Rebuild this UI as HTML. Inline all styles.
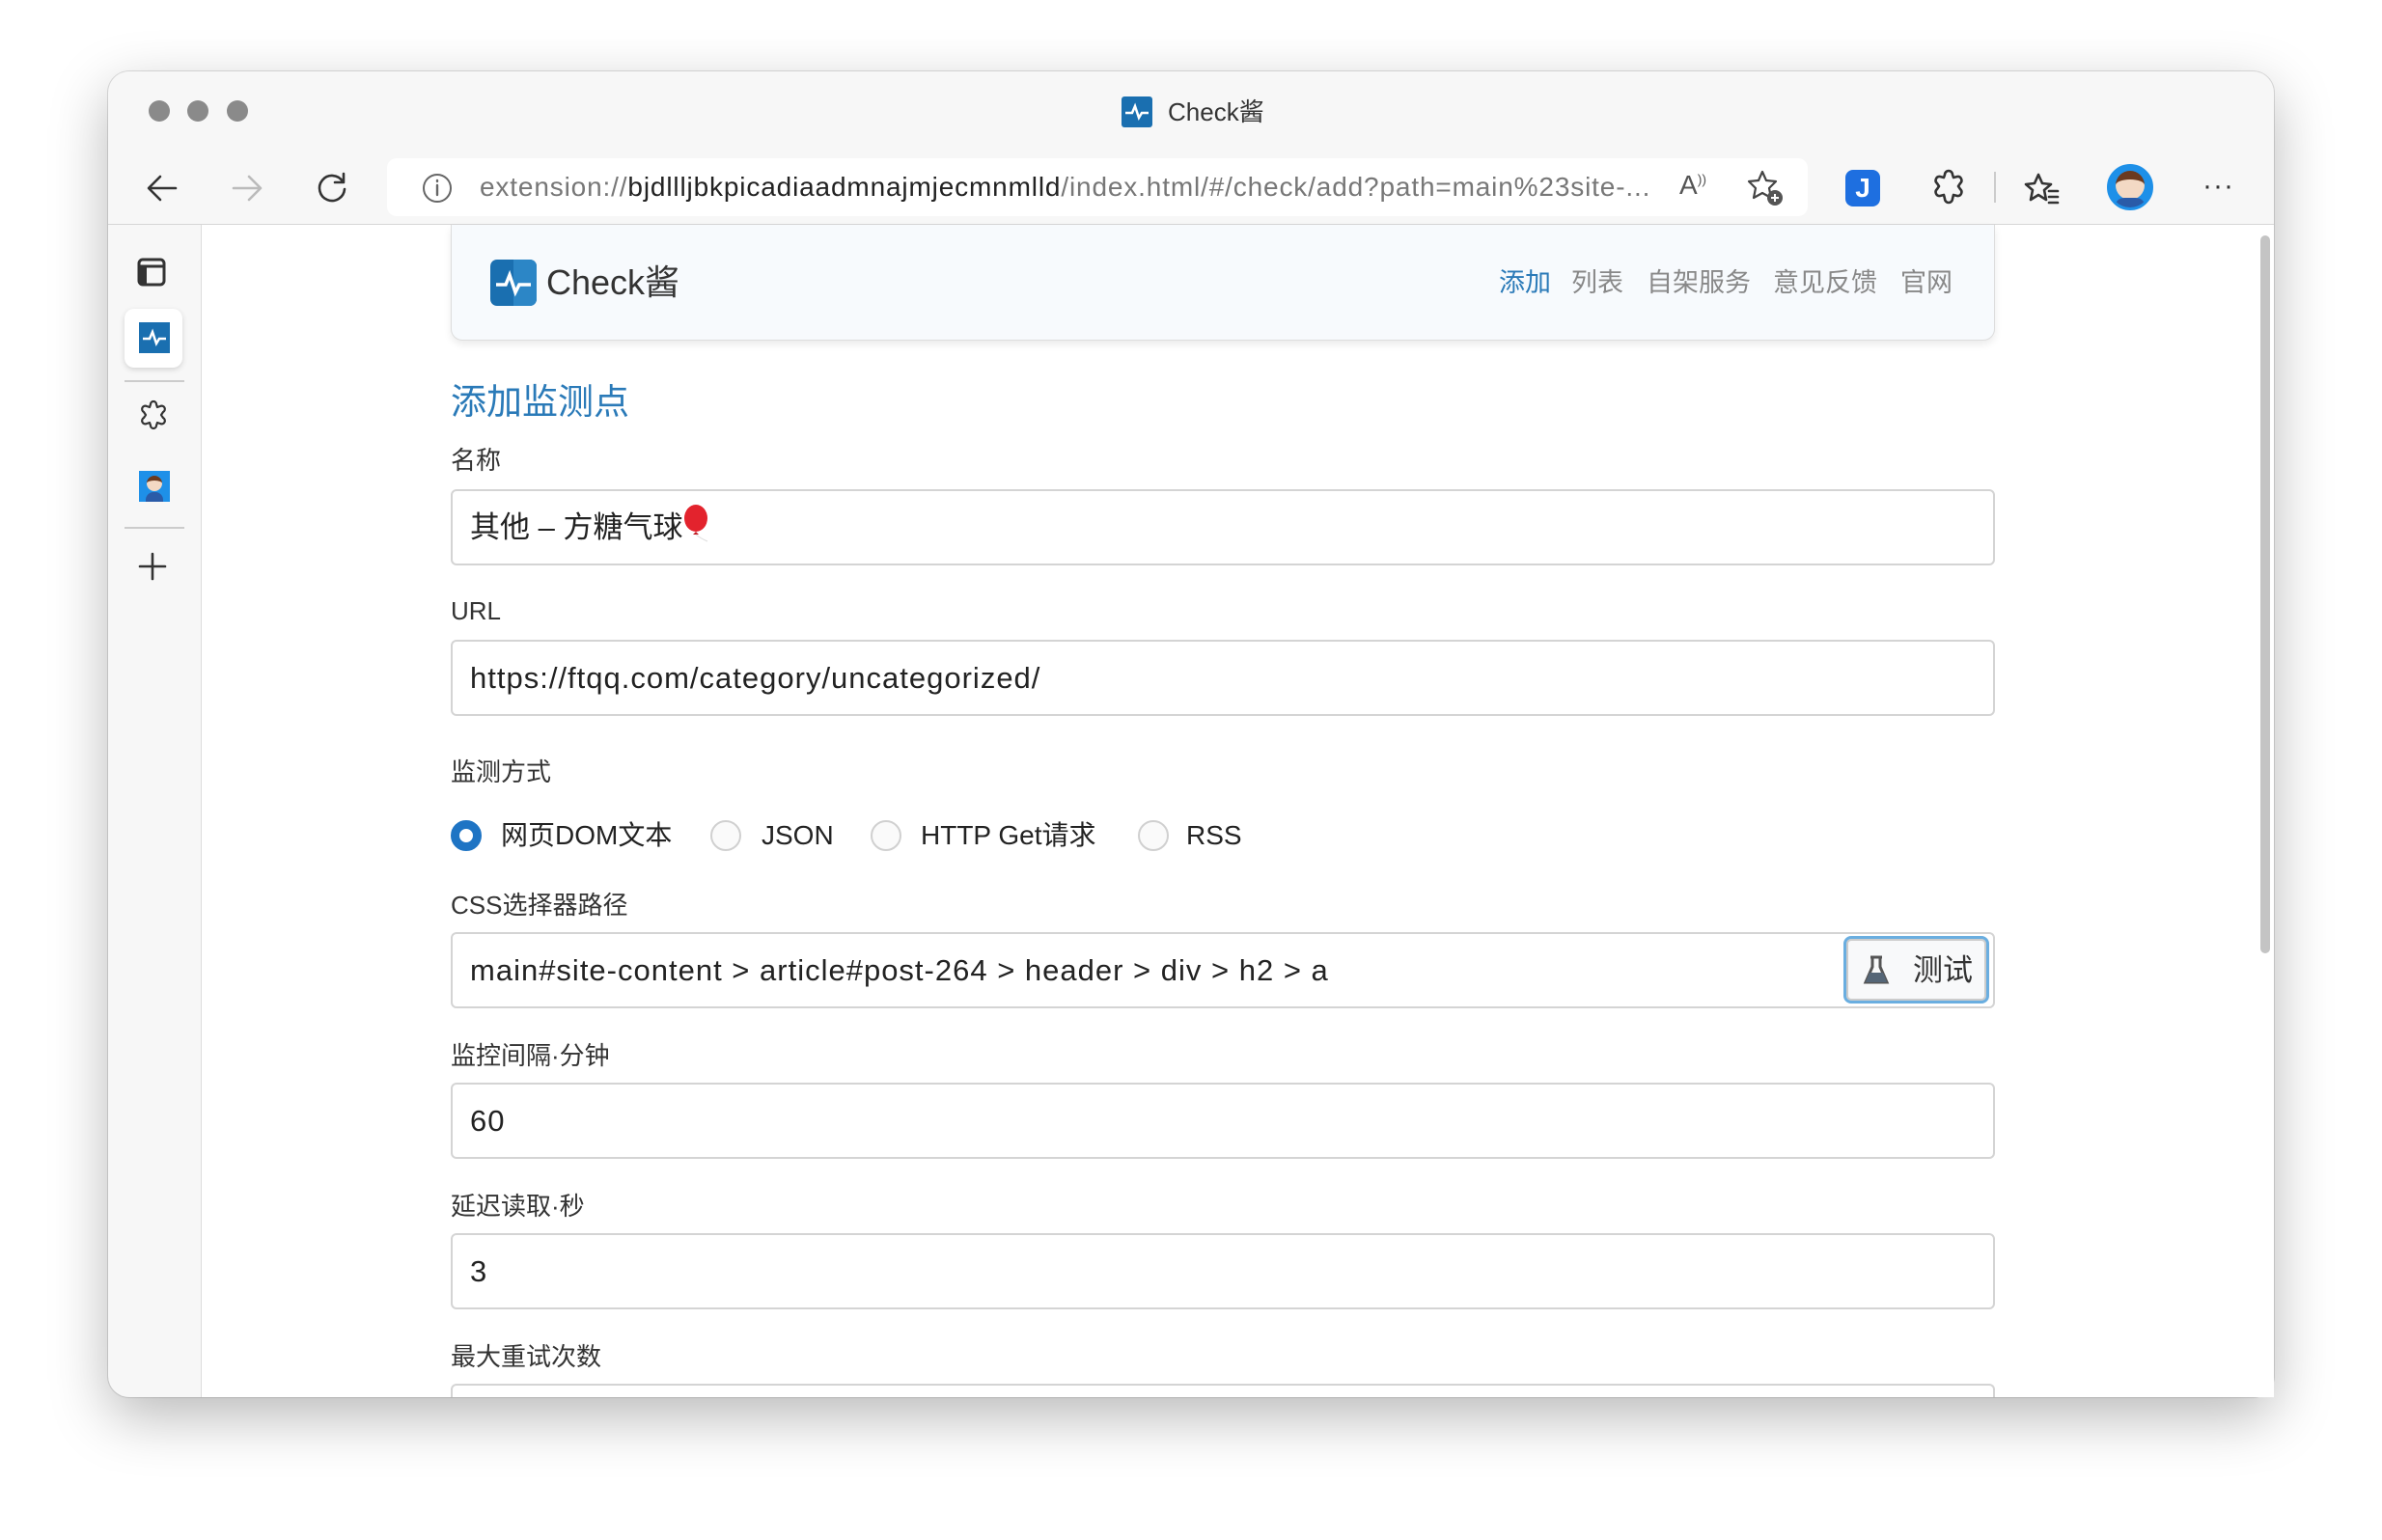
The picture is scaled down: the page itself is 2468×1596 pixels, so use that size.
<!DOCTYPE html>
<html><head><meta charset="utf-8"><style>
*{box-sizing:border-box;margin:0;padding:0}
body{width:2468px;height:1596px;background:#fff;position:relative;overflow:hidden;font-family:"Liberation Sans","Noto Sans CJK SC",sans-serif;color:#222}
.a{position:absolute}
.win{left:112px;top:74px;width:2244px;height:1374px;border-radius:22px;background:#f7f7f7;box-shadow:0 20px 60px rgba(0,0,0,.28),0 0 0 1px rgba(0,0,0,.12);overflow:hidden}
.dot{width:22px;height:22px;border-radius:50%;background:#8a8a8a;top:104px}
.lbl{font-size:26px;color:#333;left:467px;line-height:30px}
.inp{left:467px;width:1600px;height:79px;border:2px solid #d4d4d4;border-radius:6px;background:#fff;font-size:31px;color:#222;padding-left:18px;line-height:75px;letter-spacing:1px;white-space:nowrap}
.radio{width:32px;height:32px;border-radius:50%;border:2px solid #d0d0d0;background:#fafafa;top:850px}
.rt{font-size:28px;color:#222;top:850px;line-height:32px}
.nav{font-size:27px;color:#888;top:277px;line-height:32px}
.ic{stroke:#333;fill:none;stroke-width:2.6;stroke-linecap:round;stroke-linejoin:round}
</style></head><body>
<div class="a win"></div>
<div class="a dot" style="left:154px"></div>
<div class="a dot" style="left:194px"></div>
<div class="a dot" style="left:235px"></div>
<svg class="a" style="left:1162px;top:100px" width="32" height="32"><rect width="32" height="32" rx="3" fill="#1a6fb0"/><path d="M4 17h7l3-7 4 12 3-5h7" stroke="#fff" stroke-width="2.5" fill="none"/></svg>
<div class="a" style="left:1210px;top:100px;font-size:26px;line-height:32px;color:#333">Check酱</div>
<svg class="a" style="left:150px;top:177px" width="36" height="36"><path class="ic" d="M32 18H5M16 6L4 18l12 12"/></svg>
<svg class="a" style="left:238px;top:177px" width="36" height="36"><path class="ic" style="stroke:#bbb" d="M4 18h27M20 6l12 12-12 12"/></svg>
<svg class="a" style="left:325px;top:176px" width="38" height="38"><path class="ic" d="M30 12A13 13 0 1 0 32 20M31 4v9h-9"/></svg>
<div class="a" style="left:401px;top:164px;width:1472px;height:60px;background:#fff;border-radius:10px"></div>
<svg class="a" style="left:436px;top:178px" width="34" height="34"><circle cx="17" cy="17" r="14" class="ic" style="stroke:#666;stroke-width:2"/><path d="M17 14v10M17 9v1" class="ic" style="stroke:#666;stroke-width:2.4"/></svg>
<div class="a" style="left:497px;top:176px;font-size:28px;line-height:36px;color:#777;white-space:nowrap;letter-spacing:0.85px">extension://<span style="color:#222">bjdllljbkpicadiaadmnajmjecmnmlld</span>/index.html/#/check/add?path=main%23site-...</div>
<div class="a" style="left:1740px;top:176px;font-size:28px;color:#555">A<sup style="font-size:14px">))</sup></div>
<svg class="a" style="left:1808px;top:174px" width="42" height="42"><path class="ic" style="stroke:#444;stroke-width:2.2" d="M18 4l4 9 10 1-7 7 2 10-9-5-9 5 2-10-7-7 10-1z"/><circle cx="31" cy="31" r="8" fill="#555"/><path d="M31 27v8M27 31h8" stroke="#fff" stroke-width="2"/></svg>
<div class="a" style="left:1912px;top:176px;width:36px;height:38px;border-radius:8px;background:#1e6fe0;color:#fff;font-size:28px;font-weight:bold;text-align:center;line-height:38px">J</div>
<svg class="a" style="left:1999px;top:175px" width="40" height="40"><path class="ic" d="M16 6a4 4 0 0 1 8 0l1 3 4-1a4 4 0 0 1 3 7l-2 3 2 3a4 4 0 0 1-3 7l-4-1-1 4a4 4 0 0 1-8 0l-1-4-4 1a4 4 0 0 1-3-7l2-3-2-3a4 4 0 0 1 3-7l4 1z"/></svg>
<div class="a" style="left:2066px;top:178px;width:2px;height:32px;background:#ccc"></div>
<svg class="a" style="left:2096px;top:176px" width="40" height="40"><path class="ic" d="M16 5l4 9 9 1-7 6 2 10-8-5-8 5 2-10-7-6 9-1zM27 22h9M27 28h9M27 34h9"/></svg>
<div class="a" style="left:2183px;top:170px;width:48px;height:48px;border-radius:50%;background:#1e90e8;overflow:hidden;border:3px solid #1e90e8"><div style="position:absolute;left:6px;top:4px;width:30px;height:30px;border-radius:50%;background:#f3d9c4;border-top:9px solid #6b3a1f"></div><div style="position:absolute;left:5px;top:32px;width:32px;height:14px;background:#2a5ba8;border-radius:10px 10px 0 0"></div></div>
<div class="a" style="left:2282px;top:176px;font-size:30px;color:#333;letter-spacing:1px">···</div>
<div class="a" style="left:112px;top:232px;width:2244px;height:1px;background:#d6d6d6"></div>
<div class="a" style="left:208px;top:233px;width:1px;height:1215px;background:#ddd"></div>
<svg class="a" style="left:141px;top:266px" width="32" height="32"><rect x="3" y="3" width="26" height="26" rx="4" class="ic" style="stroke-width:3"/><rect x="3" y="10" width="8" height="19" fill="#333"/><path d="M3 10h26" class="ic" style="stroke-width:3"/></svg>
<div class="a" style="left:129px;top:320px;width:60px;height:61px;background:#fff;border-radius:10px;box-shadow:0 2px 6px rgba(0,0,0,.15)"></div>
<svg class="a" style="left:144px;top:334px" width="32" height="32"><rect width="32" height="32" fill="#1a6fb0"/><path d="M4 17h7l3-7 4 12 3-5h7" stroke="#fff" stroke-width="2.5" fill="none"/></svg>
<div class="a" style="left:129px;top:394px;width:62px;height:2px;background:#ccc"></div>
<svg class="a" style="left:142px;top:414px" width="34" height="34"><path class="ic" style="stroke-width:2.2" d="M14 5a3 3 0 0 1 6 0l1 3 3-1a3 3 0 0 1 3 6l-2 3 2 3a3 3 0 0 1-3 6l-3-1-1 3a3 3 0 0 1-6 0l-1-3-3 1a3 3 0 0 1-3-6l2-3-2-3a3 3 0 0 1 3-6l3 1z"/></svg>
<div class="a" style="left:144px;top:488px;width:32px;height:32px;background:#1e90e8"><div style="position:absolute;left:8px;top:5px;width:16px;height:16px;border-radius:50%;background:#f3d9c4;border-top:5px solid #6b3a1f"></div><div style="position:absolute;left:7px;top:22px;width:18px;height:10px;background:#2a5ba8;border-radius:8px 8px 0 0"></div></div>
<div class="a" style="left:129px;top:546px;width:62px;height:2px;background:#ccc"></div>
<svg class="a" style="left:142px;top:571px" width="32" height="32"><path class="ic" d="M16 3v26M3 16h26"/></svg>
<div class="a" style="left:209px;top:233px;width:2147px;height:1215px;background:#fff"></div>
<div class="a" style="left:2342px;top:244px;width:10px;height:744px;border-radius:5px;background:#c4c4c4"></div>
<div class="a" style="left:467px;top:233px;width:1600px;height:120px;background:#f7fafd;border:1.5px solid #ddd;border-top:none;border-radius:0 0 12px 12px;box-shadow:0 4px 8px rgba(0,0,0,.08)"></div>
<svg class="a" style="left:508px;top:269px" width="48" height="48"><rect width="48" height="48" rx="7" fill="#1a6fb0"/><path d="M24 0h17a7 7 0 0 1 7 7v34a7 7 0 0 1-7 7H24z" fill="#2c86c6"/><path d="M6 26h10l4-10 6 18 4-8h12" stroke="#fff" stroke-width="3.5" fill="none"/></svg>
<div class="a" style="left:566px;top:272px;font-size:36px;line-height:42px;color:#333">Check酱</div>
<div class="a nav" style="left:1553px;color:#2a7ab8">添加</div>
<div class="a nav" style="left:1628px">列表</div>
<div class="a nav" style="left:1706px">自架服务</div>
<div class="a nav" style="left:1837px">意见反馈</div>
<div class="a nav" style="left:1969px">官网</div>
<div class="a" style="left:467px;top:396px;font-size:37px;line-height:42px;color:#2a7ab8">添加监测点</div>
<div class="a lbl" style="top:462px">名称</div>
<div class="a inp" style="top:507px;letter-spacing:0">其他 – 方糖气球<svg width="30" height="40" style="vertical-align:-6px"><ellipse cx="14" cy="14" rx="12" ry="14" fill="#e3232d"/><path d="M14 28l-3 3h6z" fill="#c01820"/><path d="M14 31q5 4 12 7" stroke="#ddd" fill="none"/></svg></div>
<div class="a lbl" style="top:618px">URL</div>
<div class="a inp" style="top:663px">https://ftqq.com/category/uncategorized/</div>
<div class="a lbl" style="top:785px">监测方式</div>
<div class="a radio" style="left:467px;border:9px solid #1e74c4;background:#fff"></div>
<div class="a rt" style="left:519px">网页DOM文本</div>
<div class="a radio" style="left:736px"></div>
<div class="a rt" style="left:789px">JSON</div>
<div class="a radio" style="left:902px"></div>
<div class="a rt" style="left:954px">HTTP Get请求</div>
<div class="a radio" style="left:1179px"></div>
<div class="a rt" style="left:1229px">RSS</div>
<div class="a lbl" style="top:923px">CSS选择器路径</div>
<div class="a inp" style="top:966px">main#site-content &gt; article#post-264 &gt; header &gt; div &gt; h2 &gt; a</div>
<div class="a" style="left:1910px;top:970px;width:151px;height:70px;border:3px solid #6aaee0;border-radius:8px;background:#f8f9fa;box-shadow:inset 0 0 0 2px #ccc"></div>
<svg class="a" style="left:1930px;top:990px" width="28" height="32"><path d="M8 2h12M10 2v10L3 28h22L18 12V2" fill="none" stroke="#555" stroke-width="3"/><path d="M7 18h14l4 10H3z" fill="#556677"/></svg>
<div class="a" style="left:1982px;top:988px;font-size:31px;line-height:36px;color:#333">测试</div>
<div class="a lbl" style="top:1079px">监控间隔·分钟</div>
<div class="a inp" style="top:1122px">60</div>
<div class="a lbl" style="top:1235px">延迟读取·秒</div>
<div class="a inp" style="top:1278px">3</div>
<div class="a lbl" style="top:1391px">最大重试次数</div>
<div class="a" style="left:467px;top:1434px;width:1600px;height:14px;border:2px solid #d4d4d4;border-bottom:none;border-radius:6px 6px 0 0"></div>
</body></html>
